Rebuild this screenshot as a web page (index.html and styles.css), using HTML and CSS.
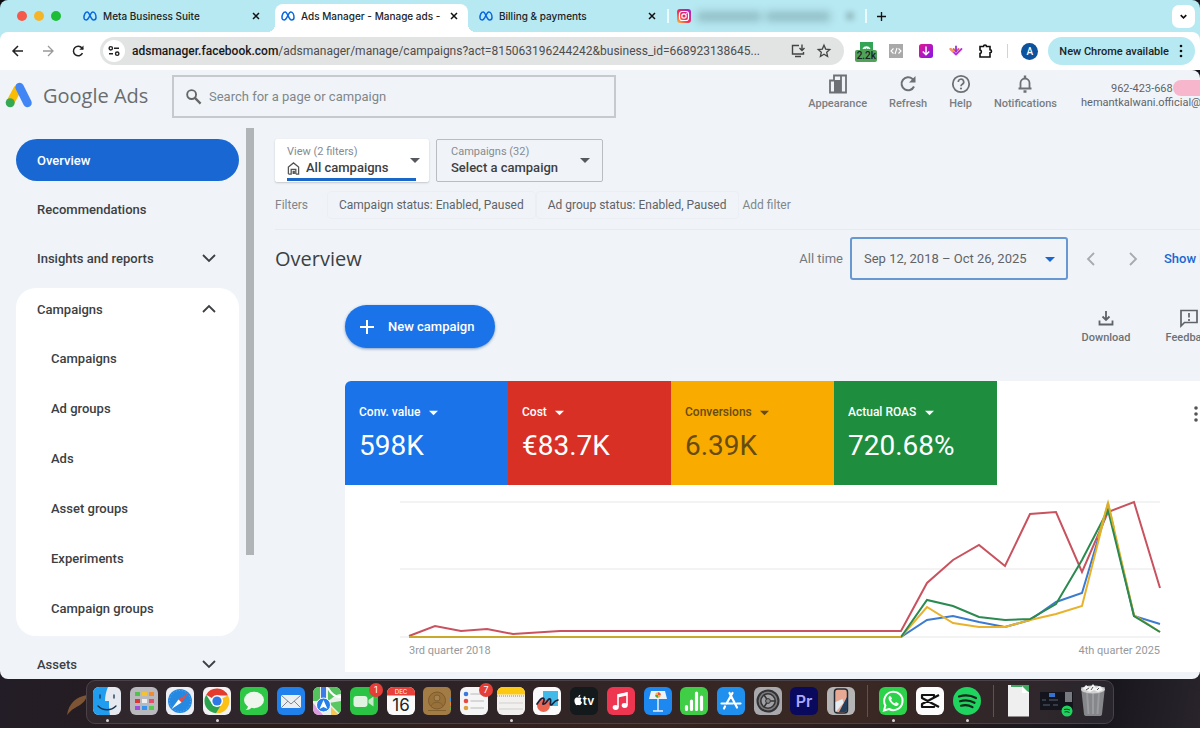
FILE: index.html
```html
<!DOCTYPE html>
<html lang="en">

<head>
    <meta charset="UTF-8">
    <meta name="viewport" content="width=device-width, initial-scale=1.0">
    <title>Google Ads - Overview</title>
    <link rel="stylesheet" href="styles.css">
</head>

<body>
    <!-- shared icons -->
    <svg class="defs" aria-hidden="true">
        <symbol id="meta" viewBox="0 0 14 14">
            <path d="M1 9.2C.8 6 2.2 3 4.2 3c2.4 0 3.6 8 6.3 8 1.4 0 2.5-.7 2.5-2.5C13 5.500 11.600 3 9.800 3 7.300 3 6 11 3.200 11 1.900 11 1.100 10.300 1 9.200z" fill="none" stroke="#0866e0" stroke-width="1.500"/>
        </symbol>
        <symbol id="close" viewBox="0 0 10 10">
            <path d="M2 2l6 6M8 2L2 8" stroke="#111" stroke-width="1.500"/>
        </symbol>
        <symbol id="caret" viewBox="0 0 10 10">
            <path d="M0 3h10L5 8z" fill="currentColor"/>
        </symbol>
        <symbol id="chevron" viewBox="0 0 14 14">
            <path d="M1 4l6 6 6-6" fill="none" stroke="currentColor" stroke-width="1.800"/>
        </symbol>
    </svg>

    <div class="desktop">
        <div class="window">
            <div class="tabbar">
                <div class="lights"><i></i><i></i><i></i></div>
                <div class="tab">
                    <svg class="favicon"><use href="#meta"/></svg>
                    <span>Meta Business Suite</span>
                    <button aria-label="Close tab"><svg><use href="#close"/></svg></button>
                </div>
                <div class="tab active">
                    <svg class="favicon"><use href="#meta"/></svg>
                    <span>Ads Manager - Manage ads -</span>
                    <button aria-label="Close tab"><svg><use href="#close"/></svg></button>
                </div>
                <div class="tab line">
                    <svg class="favicon"><use href="#meta"/></svg>
                    <span>Billing &amp; payments</span>
                    <button aria-label="Close tab"><svg><use href="#close"/></svg></button>
                </div>
                <div class="tab line">
                    <svg class="favicon" viewBox="0 0 14 14">
                        <defs>
                            <linearGradient id="insta" x1="0" y1="1" x2="1" y2="0">
                                <stop offset="0" stop-color="#fdc13c"/>
                                <stop offset=".45" stop-color="#f22b55"/>
                                <stop offset="1" stop-color="#a01be0"/>
                            </linearGradient>
                        </defs>
                        <rect width="14" height="14" rx="3" fill="url(#insta)"/>
                        <rect x="2.500" y="2.500" width="9" height="9" rx="2.500" fill="none" stroke="#fff" stroke-width="1.200"/>
                        <circle cx="7" cy="7" r="2.200" fill="none" stroke="#fff" stroke-width="1.200"/>
                        <circle cx="9.700" cy="4.300" r=".6" fill="#fff"/>
                    </svg>
                    <div class="hidden-title"><b></b><b></b></div>
                    <button class="faded" aria-label="Close tab"><svg><use href="#close"/></svg></button>
                </div>
                <button class="newtab" aria-label="New tab">
                    <svg viewBox="0 0 10 10"><path d="M5 0v10M0 5h10" stroke="#111" stroke-width="1.500"/></svg>
                </button>
                <button class="tabsearch" aria-label="Search tabs">
                    <svg viewBox="0 0 14 14"><path d="M4 5.500l3 3 3-3" fill="none" stroke="#111" stroke-width="1.700"/></svg>
                </button>
            </div>

            <div class="toolbar">
                <button class="nav" aria-label="Back">
                    <svg viewBox="0 0 14 14"><path d="M12 7H2.500M7 2L2 7l5 5" fill="none" stroke="#222" stroke-width="1.500"/></svg>
                </button>
                <button class="nav" aria-label="Forward">
                    <svg viewBox="0 0 14 14"><path d="M2 7h9.500M7 2l5 5-5 5" fill="none" stroke="#999" stroke-width="1.300"/></svg>
                </button>
                <button class="nav" aria-label="Reload">
                    <svg viewBox="0 0 14 14"><path d="M11.500 9.200A4.800 4.800 0 1 1 11 4l1 1" fill="none" stroke="#222" stroke-width="1.500"/><path d="M12.500 1.500v4.200H8.300z" fill="#222"/></svg>
                </button>
                <div class="omnibox">
                    <button class="site" aria-label="Site information">
                        <svg viewBox="0 0 14 14"><g fill="none" stroke="#222" stroke-width="1.400"><circle cx="3.800" cy="4.300" r="1.700"/><path d="M7 4.300h5M2 9.700h4"/><circle cx="10.200" cy="9.700" r="1.700"/></g></svg>
                    </button>
                    <div class="url" role="textbox" aria-label="Address"><b>adsmanager.facebook.com</b>/adsmanager/manage/campaigns?act=815063196244242&amp;business_id=668923138645...</div>
                    <button aria-label="Install">
                        <svg viewBox="0 0 16 16"><path d="M9 2.500H2.500v8.500h11V9M5 13.500h6M12 1.500v6M9.500 5L12 7.500 14.500 5" fill="none" stroke="#444" stroke-width="1.400"/></svg>
                    </button>
                    <button aria-label="Bookmark">
                        <svg viewBox="0 0 16 16"><path d="M8 2.200l1.700 3.900 4.100.4-3.100 2.800.9 4.200L8 11.300l-3.600 2.200.9-4.200-3.100-2.800 4.100-.4z" fill="none" stroke="#444" stroke-width="1.300"/></svg>
                    </button>
                </div>
                <div class="extensions">
                    <button class="counter" aria-label="Counter">
                        <svg viewBox="0 0 22 20">
                            <path d="M5 1h13v8H5z" fill="#32a455"/>
                            <path d="M8 8a4 4 0 0 1 7 0M10 8a1.500 1.500 0 0 1 3 0" fill="none" stroke="#fff" stroke-width="1.300"/>
                            <rect y="9" width="22" height="12" rx="2" fill="#51a259"/>
                        </svg>
                        <span>2.2k</span>
                    </button>
                    <button aria-label="Code">
                        <svg viewBox="0 0 14 14"><path d="M0 0h14v14H0z" fill="#a9a9a9"/><path d="M4.500 4.500L2 7l2.500 2.500M9.500 4.500L12 7 9.500 9.500M8 4L6 10" fill="none" stroke="#fff" stroke-width="1.100"/></svg>
                    </button>
                    <button aria-label="Downloader">
                        <svg viewBox="0 0 14 14"><defs><linearGradient id="dl" x1="0" y1="0" x2="1" y2="1"><stop offset="0" stop-color="#e01890"/><stop offset="1" stop-color="#8516ec"/></linearGradient></defs><rect width="14" height="14" rx="2.500" fill="url(#dl)"/><path d="M7 2.500v8M3.800 7.500L7 10.700l3.200-3.200" fill="none" stroke="#fff" stroke-width="1.500"/></svg>
                    </button>
                    <button aria-label="Saver">
                        <svg viewBox="0 0 14 14"><g fill="none" stroke-width="1.800" stroke-linejoin="round" stroke-linecap="round"><path d="M1.500 5L7 10.500 12.500 5" stroke="#b72fe6"/><path d="M4.500 5L7 7.500 9.500 5" stroke="#ef5867"/><path d="M7 2.500v5" stroke="#8a35e0"/><path d="M1.500 5l2.500 2.500" stroke="#f79b42"/></g></svg>
                    </button>
                    <button aria-label="Extensions">
                        <svg viewBox="0 0 14 14"><path d="M1 2.500h3.500a1.500 1.500 0 0 1 3 0H11v3.300a1.500 1.500 0 0 1 0 3V13H1V9.500a1.800 1.800 0 0 0 0-3.500z" fill="none" stroke="#111" stroke-width="1.600"/></svg>
                    </button>
                </div>
                <i class="divider"></i>
                <button class="avatar">A</button>
                <button class="update">New Chrome available
                    <svg viewBox="0 0 4 14"><g fill="#111"><circle cx="2" cy="2" r="1.300"/><circle cx="2" cy="7" r="1.300"/><circle cx="2" cy="12" r="1.300"/></g></svg>
                </button>
            </div>

            <div class="page">
                <header>
                    <a class="logo" href="#">
                        <svg viewBox="0 0 28 28">
                            <path d="M5.500 21L13 7" stroke="#fbbc04" stroke-width="8"/>
                            <path d="M14.500 6l8 16" stroke="#4285f4" stroke-width="8.500" stroke-linecap="round"/>
                            <circle cx="5.200" cy="21.800" r="4.500" fill="#34a853"/>
                        </svg>
                        <span>Google Ads</span>
                    </a>
                    <label class="search">
                        <svg viewBox="0 0 18 18"><circle cx="7" cy="7" r="4.700" fill="none" stroke="#666" stroke-width="2"/><path d="M10.500 10.500l6 6" stroke="#666" stroke-width="2.400"/></svg>
                        <input type="text" placeholder="Search for a page or campaign" aria-label="Search">
                    </label>
                    <div class="actions">
                        <button>
                            <svg viewBox="0 0 20 20"><path d="M6 1.500h12v17H2V6.500h4zM13 1.500v17" fill="none" stroke="#6d7175" stroke-width="1.800"/><path d="M6 6h7v12H6z" fill="#6d7175"/></svg>
                            Appearance
                        </button>
                        <button>
                            <svg viewBox="0 0 20 20"><path d="M16 12.500A6.500 6.500 0 1 1 14.500 5l2 2" fill="none" stroke="#6d7175" stroke-width="2"/><path d="M17.500 2v6.500H11z" fill="#6d7175"/></svg>
                            Refresh
                        </button>
                        <button>
                            <svg viewBox="0 0 20 20"><circle cx="10" cy="10" r="8.200" fill="none" stroke="#6d7175" stroke-width="1.800"/><path d="M7.300 8a2.700 2.700 0 1 1 4 2.300c-1 .6-1.300 1-1.300 2" fill="none" stroke="#6d7175" stroke-width="1.700"/><circle cx="10" cy="14.500" r="1.100" fill="#6d7175"/></svg>
                            Help
                        </button>
                        <button>
                            <svg viewBox="0 0 20 20"><path d="M5.500 14.500V9a4.500 4.500 0 0 1 9 0v5.500M3.500 14.500h13" fill="none" stroke="#6d7175" stroke-width="1.800"/><path d="M10 1.500v3M8.500 17.500h3" stroke="#6d7175" stroke-width="2.400"/></svg>
                            Notifications
                        </button>
                    </div>
                    <div class="account">
                        <div>962-423-668<i></i></div>
                        <div>hemantkalwani.official@</div>
                    </div>
                </header>

                <div class="content">
                    <nav class="sidebar">
                        <div class="menu">
                            <a class="current" href="#">Overview</a>
                            <a href="#">Recommendations</a>
                            <a href="#">Insights and reports <svg><use href="#chevron"/></svg></a>
                            <div class="group">
                                <a href="#">Campaigns <svg class="up"><use href="#chevron"/></svg></a>
                                <a class="sub" href="#">Campaigns</a>
                                <a class="sub" href="#">Ad groups</a>
                                <a class="sub" href="#">Ads</a>
                                <a class="sub" href="#">Asset groups</a>
                                <a class="sub" href="#">Experiments</a>
                                <a class="sub" href="#">Campaign groups</a>
                            </div>
                            <a class="last" href="#">Assets <svg><use href="#chevron"/></svg></a>
                        </div>
                        <div class="scrollbar"></div>
                    </nav>

                    <main>
                        <div class="pickers">
                            <div class="picker view">
                                <label for="view">View (2 filters)</label>
                                <div class="value">
                                    <svg class="home" viewBox="0 0 14 14"><path d="M1.500 13V5.500L7 1l5.500 4.500V13H9.500" fill="none" stroke="#555" stroke-width="1.400"/><path d="M1.500 13h3V8h5v5" fill="none" stroke="#555" stroke-width="1.400"/><path d="M6 9.500h2.500V13H6z" fill="#555"/></svg>
                                    <select id="view"><option>All campaigns</option></select>
                                </div>
                                <svg class="caret"><use href="#caret"/></svg>
                            </div>
                            <div class="picker">
                                <label for="campaign">Campaigns (32)</label>
                                <div class="value">
                                    <select id="campaign"><option>Select a campaign</option></select>
                                </div>
                                <svg class="caret"><use href="#caret"/></svg>
                            </div>
                        </div>

                        <div class="filters">
                            <span>Filters</span>
                            <button class="chip">Campaign status: Enabled, Paused</button>
                            <button class="chip">Ad group status: Enabled, Paused</button>
                            <button class="add">Add filter</button>
                        </div>

                        <div class="titlebar">
                            <h1>Overview</h1>
                            <label for="range">All time</label>
                            <div class="range">
                                <select id="range"><option>Sep 12, 2018 – Oct 26, 2025</option></select>
                                <svg class="caret"><use href="#caret"/></svg>
                            </div>
                            <button class="step" aria-label="Previous period"><svg class="left"><use href="#chevron"/></svg></button>
                            <button class="step" aria-label="Next period"><svg class="right"><use href="#chevron"/></svg></button>
                            <a class="show" href="#">Show l</a>
                        </div>

                        <div class="tools">
                            <button class="new">
                                <svg viewBox="0 0 16 16"><path d="M8 1v14M1 8h14" stroke="#fff" stroke-width="2"/></svg>
                                New campaign
                            </button>
                            <button class="tool download">
                                <svg viewBox="0 0 18 18"><path d="M9 2v9M5.500 7.500L9 11l3.500-3.500M2.500 11.500v4h13v-4" fill="none" stroke="#5f6368" stroke-width="1.800"/></svg>
                                Download
                            </button>
                            <button class="tool">
                                <svg viewBox="0 0 18 18"><path d="M1 17V1.500h16v12H4.500z" fill="none" stroke="#5f6368" stroke-width="1.700"/><path d="M9 4v4.500M9 10v2" stroke="#5f6368" stroke-width="1.700"/></svg>
                                Feedback
                            </button>
                        </div>

                        <section class="card">
                            <div class="scores">
                                <div class="score blue">
                                    <label><select aria-label="First metric"><option>Conv. value</option></select><svg><use href="#caret"/></svg></label>
                                    <strong>598K</strong>
                                </div>
                                <div class="score red">
                                    <label><select aria-label="Second metric"><option>Cost</option></select><svg><use href="#caret"/></svg></label>
                                    <strong>€83.7K</strong>
                                </div>
                                <div class="score yellow">
                                    <label><select aria-label="Third metric"><option>Conversions</option></select><svg><use href="#caret"/></svg></label>
                                    <strong>6.39K</strong>
                                </div>
                                <div class="score green">
                                    <label><select aria-label="Fourth metric"><option>Actual ROAS</option></select><svg><use href="#caret"/></svg></label>
                                    <strong>720.68%</strong>
                                </div>
                                <button class="more" aria-label="More">
                                    <svg viewBox="0 0 4 16"><g fill="#555"><circle cx="2" cy="2" r="1.800"/><circle cx="2" cy="8" r="1.800"/><circle cx="2" cy="14" r="1.800"/></g></svg>
                                </button>
                            </div>
                            <div class="chart">
                                <svg viewBox="0 0 760 144" preserveAspectRatio="none">
                                    <g class="grid"><path d="M0 4h760M0 71h760M0 139h760"/></g>
                                    <polyline stroke="#c9525f" points="9,138 35,128 61,133 87,131 113,136 160,133 501,133 527,85 553,62 579,47 605,68 630,16 656,14 682,74 708,14 734,4 760,90"/>
                                    <polyline stroke="#3d7bd0" points="9,139 501,139 527,122 553,118 579,124 605,129 630,122 656,104 682,95 708,8 734,118 760,126"/>
                                    <polyline stroke="#e8b22c" points="9,139 501,139 527,109 553,125 579,129 605,129 630,122 656,116 682,108 708,5 734,117 760,134"/>
                                    <polyline stroke="#2b8a50" points="501,139 527,102 553,108 579,119 605,122 630,121 656,106 682,62 708,12 734,118 760,134"/>
                                    <polyline stroke="#c9a92c" points="9,139 501,139"/>
                                    <polyline stroke="#d9b02c" points="698,40 708,5 714,30"/>
                                </svg>
                                <div class="axis"><span>3rd quarter 2018</span><span>4th quarter 2025</span></div>
                            </div>
                        </section>
                    </main>
                </div>
            </div>
        </div>

        <svg class="leaf" viewBox="0 0 20 22" aria-hidden="true"><path d="M0 20C2 8 9 2 20 0c-1 7-7 10-12 13-4 2-5 4-8 7z" fill="#7d5434"/></svg>

        <div class="dock">
            <div class="app running">
                <svg viewBox="0 0 28 28"><rect width="28" height="28" rx="6" fill="#e6eaf0"/><path d="M6 0h9c-2 5-3 9-3 14h4c0 5 0 9 1 14H6a6 6 0 0 1-6-6V6a6 6 0 0 1 6-6z" fill="#219df0"/><path d="M7 8v3M21 8v3M5 19c5 5 13 5 18 0" fill="none" stroke="#12304a" stroke-width="1.300" stroke-linecap="round"/></svg>
            </div>
            <div class="app">
                <svg viewBox="0 0 28 28"><rect width="28" height="28" rx="6" fill="#b9b9bd"/><path d="M5 5h5v4H5z" fill="#51c14e"/><path d="M12 5h5v4h-5z" fill="#f4c233"/><path d="M19 5h5v4h-5z" fill="#ee8c35"/><path d="M5 12h5v4H5z" fill="#d83936"/><path d="M12 12h5v4h-5z" fill="#eee"/><path d="M19 12h5v4h-5z" fill="#e84c6c"/><path d="M5 19h5v4H5z" fill="#a14ee0"/><path d="M12 19h5v4h-5z" fill="#3694ee"/><path d="M19 19h5v4h-5z" fill="#55c84d"/></svg>
            </div>
            <div class="app">
                <svg viewBox="0 0 28 28"><rect width="28" height="28" rx="6" fill="#eceef4"/><circle cx="14" cy="14" r="12" fill="#2589e2"/><circle cx="14" cy="14" r="10.500" fill="none" stroke="#5fadee" stroke-dasharray="1 2"/><path d="M22.500 6L15.500 15.500 12.500 12.500z" fill="#e94b43"/><path d="M5.500 22l7-9.500 3 3z" fill="#fff"/></svg>
            </div>
            <div class="app running">
                <svg viewBox="0 0 28 28"><rect width="28" height="28" rx="6" fill="#f2f2f2"/><path d="M14 14L3.200 7.700A12.300 12.300 0 0 1 25 8.500H14z" fill="#e33b2e"/><path d="M14 14L25 8.500A12.300 12.300 0 0 1 13 26.300l5-9z" fill="#fbc116"/><path d="M14 14l4 4-5 8.300A12.300 12.300 0 0 1 3.200 7.700L9 17z" fill="#2ba24c"/><circle cx="14" cy="14" r="6" fill="#fff"/><circle cx="14" cy="14" r="4.600" fill="#2f78e6"/></svg>
            </div>
            <div class="app">
                <svg viewBox="0 0 28 28"><rect width="28" height="28" rx="6" fill="#2ec846"/><ellipse cx="14" cy="13" rx="10" ry="8.300" fill="#eef6ee"/><path d="M8 18c0 3-1 4-2.500 5 3 .3 5-1 6.500-3z" fill="#eef6ee"/></svg>
            </div>
            <div class="app">
                <svg viewBox="0 0 28 28"><rect width="28" height="28" rx="6" fill="#2080ec"/><rect x="4" y="8" width="20" height="13" rx="1.500" fill="#eceff2"/><path d="M4.500 8.500L14 17l9.500-8.500M4.500 20.500L11 14M23.500 20.500L17 14" fill="none" stroke="#7d8890"/></svg>
            </div>
            <div class="app">
                <svg viewBox="0 0 28 28"><clipPath id="mapclip"><rect width="28" height="28" rx="6"/></clipPath><g clip-path="url(#mapclip)"><path d="M0 0h28v28H0z" fill="#e9f0e9"/><path d="M0 0h7v14H0zM15 0h13v7c-6 0-8 4-13 7z" fill="#54c35d"/><path d="M0 16l10 12H0z" fill="#dc9cde"/><path d="M16 16l12 12V14z" fill="#59c862"/><path d="M18 20l8 8h-8z" fill="#f7c64f"/><path d="M8 0h5v12H8z" fill="#3b7ce6"/><path d="M15 1c3 6 7 9 13 9" fill="none" stroke="#fff" stroke-width="2"/><circle cx="10.500" cy="18" r="7" fill="#237fe9" stroke="#fff"/><path d="M10.500 13l4 9-4-2-4 2z" fill="#fff"/></g></svg>
            </div>
            <div class="app">
                <svg viewBox="0 0 28 28"><rect width="28" height="28" rx="6" fill="#2ac344"/><rect x="3.500" y="9" width="14" height="11" rx="3" fill="#dff3e0"/><path d="M18.500 13l5-3.500v10l-5-3.500z" fill="#c6e9c9"/></svg>
                <em>1</em>
            </div>
            <div class="app">
                <svg viewBox="0 0 28 28"><rect width="28" height="28" rx="6" fill="#fafafa"/><path d="M0 8.500V6a6 6 0 0 1 6-6h16a6 6 0 0 1 6 6v2.500z" fill="#e84038"/><text x="14" y="7" font-size="6" fill="#fff">DEC</text><text x="14" y="24" font-size="17" fill="#222">16</text></svg>
            </div>
            <div class="app">
                <svg viewBox="0 0 28 28"><rect width="28" height="28" rx="5" fill="#a37b45"/><circle cx="14" cy="13.500" r="8.500" fill="#987039" stroke="#7e5b2d"/><circle cx="14" cy="11" r="3" fill="#a78150" stroke="#80602f"/><path d="M8 19c2-5 10-5 12 0M5 23.500h18" fill="none" stroke="#80602f"/><path d="M27 10h1v4h-1z" fill="#3d94d8"/><path d="M27 15h1v4h-1z" fill="#e68431"/><path d="M27 20h1v3h-1z" fill="#56b650"/></svg>
            </div>
            <div class="app">
                <svg viewBox="0 0 28 28"><rect width="28" height="28" rx="6" fill="#f5f5f5"/><path d="M10.500 7H24M10.500 14H24M10.500 21H24" stroke="#b9b9b9"/><circle cx="6" cy="7" r="2.300" fill="#3d78dd"/><circle cx="6" cy="14" r="2.300" fill="#e54a45"/><circle cx="6" cy="21" r="2.300" fill="#dda03c"/></svg>
                <em>7</em>
            </div>
            <div class="app running">
                <svg viewBox="0 0 28 28"><rect width="28" height="28" rx="6" fill="#f2f0ee"/><path d="M0 7.500V6a6 6 0 0 1 6-6h16a6 6 0 0 1 6 6v1.500z" fill="#fbc911"/><path d="M0 9h28" stroke="#9c8a58" stroke-dasharray="1 1"/><path d="M2 16h24M2 22h24" stroke="#d0d0d0"/></svg>
            </div>
            <div class="app">
                <svg viewBox="0 0 28 28"><rect width="28" height="28" rx="6" fill="#fbfbfb"/><path d="M10 4h15v15H10z" fill="#41b9e9"/><circle cx="10.500" cy="18.500" r="6.500" fill="#ec6550"/><path d="M4 17c4-6 6-7 7-5s-3 6 0 5 4-6 6-5-1 6 1 6 2-4 7-5" fill="none" stroke="#16213e" stroke-width="1.700" stroke-linecap="round"/></svg>
            </div>
            <div class="app">
                <svg viewBox="0 0 28 28"><rect width="28" height="28" rx="6" fill="#14191c"/><path d="M8.500 10.800c1.200-.7 2.300-.5 3.100.5-1.400 1.200-1.200 3.200.4 4-.7 1.900-1.700 3.200-2.800 2.800-.8-.3-1.200-.3-2 0C5 18.600 3.300 12.600 5.500 11c1-.7 2-.5 3-.2zM8.300 10.300c0-1.400.8-2.300 2-2.500.1 1.400-.8 2.400-2 2.500z" fill="#fff"/><text x="18.500" y="18" font-size="12" font-weight="600" fill="#fff">tv</text></svg>
            </div>
            <div class="app">
                <svg viewBox="0 0 28 28"><rect width="28" height="28" rx="6" fill="#ee3650"/><path d="M11 20V8l9-2v12" fill="none" stroke="#fff" stroke-width="1.600"/><path d="M11 7.500l9-2v3l-9 2z" fill="#fff"/><ellipse cx="8.700" cy="20.500" rx="3" ry="2.400" fill="#fff"/><ellipse cx="17.700" cy="18.500" rx="3" ry="2.400" fill="#fff"/></svg>
            </div>
            <div class="app">
                <svg viewBox="0 0 28 28"><rect width="28" height="28" rx="6" fill="#1d88ef"/><path d="M7 4h14l2 8H5z" fill="#eef3f7"/><circle cx="14" cy="8" r="2.700" fill="#f2b33c"/><path d="M14 8V5.300A2.700 2.700 0 0 1 16.700 8z" fill="#e0524b"/><path d="M14 8v2.700A2.700 2.700 0 0 1 11.300 8z" fill="#43a95b"/><path d="M14 12v11.500M9 24h10" stroke="#e6eef5" stroke-width="1.500"/></svg>
            </div>
            <div class="app">
                <svg viewBox="0 0 28 28"><rect width="28" height="28" rx="6" fill="#3fce46"/><path d="M6.500 22.500V19.500M11.500 22.500V14M16.500 22.500V6M21.500 22.500V10" stroke="#fff" stroke-width="3.200" stroke-linecap="round"/></svg>
            </div>
            <div class="app">
                <svg viewBox="0 0 28 28"><rect width="28" height="28" rx="6" fill="#2090ef"/><path d="M12.500 6l7.500 14.500M15.500 6l-6 10.500M8 19.500l-1 2M4.500 16.500H16M20 16.500h3.500" stroke="#fff" stroke-width="2.200" stroke-linecap="round"/></svg>
            </div>
            <div class="app">
                <svg viewBox="0 0 28 28"><rect width="28" height="28" rx="6" fill="#a9a9ad"/><circle cx="14" cy="14" r="10.500" fill="#7b7b7f" stroke="#333" stroke-width="2"/><circle cx="14" cy="14" r="7.200" fill="#a2a2a6" stroke="#333" stroke-width="1.500"/><circle cx="14" cy="14" r="2.400" fill="#888" stroke="#333"/><path d="M16.500 14H21M12.700 12l-3-4.500M12.700 16l-3 4.500" stroke="#333" stroke-width="1.500"/></svg>
            </div>
            <div class="app">
                <svg viewBox="0 0 28 28"><rect width="28" height="28" rx="6" fill="#09095d"/><text x="14" y="20" font-size="16" font-weight="600" fill="#a9a8fa">Pr</text></svg>
            </div>
            <div class="app">
                <svg viewBox="0 0 28 28"><rect width="28" height="28" rx="6" fill="#b5b5b5"/><rect x="7.500" y="2" width="13" height="24" rx="3" fill="#e7a894" stroke="#252a33" stroke-width="1.500"/><path d="M12 25l8-15v13a2 2 0 0 1-2 2z" fill="#243f5c"/><path d="M8.500 15l7-3 1 4-8 9z" fill="#e4edf2"/></svg>
            </div>
            <hr>
            <div class="app running">
                <svg viewBox="0 0 28 28"><rect width="28" height="28" rx="6" fill="#2bd24a"/><path d="M5 23.500l1.400-5A9.200 9.200 0 1 1 10 22z" fill="none" stroke="#fff" stroke-width="2"/><path d="M11 8.800c-2 1-2 3.500.5 6.500 3 3.600 6 4.500 7.500 3 .8-.8.8-1.800.3-2.100l-2-1c-1-.4-1.200 1.400-2.200.8-1.300-.6-2.400-1.900-2.900-3-.4-.8 1.100-1 .7-2.100z" fill="#fff"/></svg>
            </div>
            <div class="app">
                <svg viewBox="0 0 28 28"><rect width="28" height="28" rx="6" fill="#fcfcfc"/><path d="M18 11V8H6v3l17 9M18 17v3H6v-3l17-9" fill="none" stroke="#111" stroke-width="2.200" stroke-linejoin="round"/></svg>
            </div>
            <div class="app running">
                <svg viewBox="0 0 28 28"><circle cx="14" cy="14" r="14" fill="#1fd45f"/><path d="M6 9.500c6-1.800 12-1.200 17 1.500M7 14.300c5-1.500 10-1 14.500 1.500M8 18.700c4-1.200 8-.7 11.500 1.400" fill="none" stroke="#17271c" stroke-width="2.200" stroke-linecap="round"/></svg>
            </div>
            <hr>
            <div class="app">
                <svg viewBox="0 0 28 28"><path d="M3-2h15l6 6v25.500H3z" fill="#efefef"/><path d="M6-2h18v7l-4-1-3-4H6z" fill="#3daa5f"/><path d="M17-1v7h7z" fill="#fff"/></svg>
            </div>
            <div class="app">
                <svg viewBox="0 0 28 28"><path d="M-2 5h33v18H-2z" fill="#14151c"/><path d="M7 6h6v4H7z" fill="#3474cf"/><path d="M23 5h7v10h-7z" fill="#777a80"/><path d="M0 13h4M7 13h9M1 18h7M11 18h5" stroke="#343b47" stroke-width="2"/><circle cx="25" cy="24" r="5.500" fill="#1ed45e"/><path d="M22 22.500q3-1 6 .5M22.500 25q2.500-1 5 .5" fill="none" stroke="#173322"/></svg>
            </div>
            <div class="app">
                <svg viewBox="0 0 28 28"><path d="M2 0h24l-3 27q0 2-3 2H8q-3 0-3-2z" fill="#85878b"/><path d="M8 5l1.500 22M14 5v22M20 5l-1.500 22" stroke="#9a9c9f" stroke-width="2"/><ellipse cx="14" cy="2.500" rx="12" ry="4" fill="#d0d0d0"/><path d="M4 2l3-4 4 3 3-4 3 4 4-2 3 4-5 2-4-2-4 2-4-2z" fill="#f4f4f4"/><path d="M7 3l3-2M12 3l2-3M18 3l2-2" stroke="#555"/></svg>
            </div>
        </div>
    </div>
</body>

</html>
```
FILE: styles.css
```css
body {
    margin: 0;
    background: white;
    font-family: Roboto, "Liberation Sans", sans-serif;
    color: #3c4043;
}

button,
select,
input {
    font: inherit;
    color: inherit;
    background: none;
    border: 0;
    padding: 0;
    margin: 0;
}

select {
    appearance: none;
    outline: 0;
}

a {
    color: inherit;
    text-decoration: none;
}

.defs {
    position: absolute;
    width: 0;
    height: 0;
}

svg {
    display: block;
    flex: none;
    overflow: visible;
}

.desktop {
    position: relative;
    overflow: hidden;
    padding-bottom: 4px;
    background: linear-gradient(100deg, #0c0b10, #221d27 8%, #2b1c1b 30%, #35231e 60%, #17151c 92%, #29242c);
}

.window {
    border-radius: 8px;
    overflow: hidden;
    background: #16131c;
}

/* browser tabs */
.tabbar {
    display: flex;
    align-items: center;
    height: 32px;
    background: #b7e9f2;
    font: 500 10px Inter, sans-serif;
    color: #1c2326;
}

.lights {
    display: flex;
    gap: 7px;
    width: 58px;
    padding-left: 17px;
}

.lights i {
    width: 10px;
    height: 10px;
    border-radius: 50%;
    background: #f5594b;
}

.lights i:nth-child(2) {
    background: #f5b52a;
}

.lights i:nth-child(3) {
    background: #1dbd37;
}

.tab {
    position: relative;
    z-index: 0;
    display: flex;
    align-items: center;
    gap: 6px;
    flex: 0 1 198px;
    min-width: 0;
    box-sizing: border-box;
    height: 32px;
    padding: 0 12px 0 8px;
}

.tab span {
    flex: 1;
    overflow: hidden;
    white-space: nowrap;
}

.tab button svg {
    width: 10px;
    height: 10px;
}

.favicon {
    width: 14px;
    height: 14px;
}

.active::before {
    content: "";
    position: absolute;
    z-index: -1;
    inset: 4px 3px 0 2px;
    border-radius: 8px 8px 0 0;
    background: white;
}

.active::after {
    content: "";
    position: absolute;
    z-index: -1;
    inset: 24px -5px 0 -6px;
    background:
        radial-gradient(circle at 0 0, transparent 8px, white 8px) left / 8px 8px no-repeat,
        radial-gradient(circle at 100% 0, transparent 8px, white 8px) right / 8px 8px no-repeat;
}

.line::after {
    content: "";
    position: absolute;
    right: 0;
    top: 9px;
    width: 2px;
    height: 14px;
    background: #eafafd;
}

.hidden-title {
    display: flex;
    gap: 5px;
    flex: 1;
    filter: blur(4px);
}

.hidden-title b {
    width: 64px;
    height: 9px;
    background: #8db8c1;
}

.faded {
    filter: blur(3px);
    opacity: .6;
}

.newtab {
    padding: 0 10px;
}

.newtab svg {
    width: 9px;
    height: 9px;
}

.tabsearch {
    margin: 0 5px 0 auto;
    padding: 5px;
    border-radius: 7px;
    background: white;
}

.tabsearch svg {
    width: 13px;
    height: 13px;
}

/* address bar */
.toolbar {
    position: relative;
    z-index: 0;
    display: flex;
    align-items: center;
    height: 38px;
    font-size: 11px;
    font-weight: 500;
    color: #1c2326;
}

.toolbar::before {
    content: "";
    position: absolute;
    inset: 0 0 20px;
    z-index: -1;
    background: #b7e9f2;
}

.toolbar::after {
    content: "";
    position: absolute;
    inset: 0;
    z-index: -1;
    border-radius: 8px 8px 0 0;
    background: white;
}

.nav {
    margin-left: 11px;
    margin-right: 5px;
}

.nav svg {
    width: 14px;
    height: 14px;
}

.omnibox {
    display: flex;
    align-items: center;
    gap: 10px;
    flex: 1;
    min-width: 0;
    height: 28px;
    margin-left: 10px;
    padding-right: 12px;
    border-radius: 14px;
    background: #e2e3e3;
}

.site {
    margin: 0 -3px 0 3px;
    padding: 4px;
    border-radius: 50%;
    background: white;
}

.url {
    flex: 1;
    overflow: hidden;
    white-space: nowrap;
    font-weight: 400;
    font-size: 12px;
    color: #4b4d4f;
}

.url b {
    font-weight: 500;
    color: #16191b;
}

.omnibox button svg {
    width: 16px;
    height: 16px;
}

.omnibox .site svg {
    width: 14px;
    height: 14px;
}

.extensions {
    display: flex;
    align-items: center;
    gap: 16px;
    margin-left: 11px;
}

.extensions svg {
    width: 14px;
    height: 14px;
}

.counter {
    position: relative;
    margin-right: -4px;
}

.counter svg {
    width: 22px;
    height: 20px;
}

.counter span {
    position: absolute;
    left: 0;
    right: 0;
    bottom: -1px;
    font-size: 10px;
    line-height: 12px;
}

.divider {
    width: 1px;
    height: 14px;
    margin: 0 13px 0 14px;
    background: #b7dde8;
}

.avatar {
    width: 17px;
    height: 17px;
    border-radius: 50%;
    background: #0c529c;
    color: white;
    font-size: 10px;
}

.update {
    display: flex;
    align-items: center;
    gap: 10px;
    height: 28px;
    margin: 0 5px 0 10px;
    padding: 0 12px 0 11px;
    border-radius: 14px;
    background: #b7e9f2;
    white-space: nowrap;
}

.update svg {
    width: 4px;
    height: 14px;
}

/* google ads */
.page {
    overflow: hidden;
    border-top-right-radius: 8px;
    background: #f0f4f8;
}

header {
    display: flex;
    align-items: flex-start;
    height: 58px;
}

.logo {
    display: flex;
    align-items: center;
    gap: 10px;
    flex: none;
    box-sizing: border-box;
    width: 172px;
    padding: 11px 0 0 5px;
    font: 20px "Open Sans", sans-serif;
    color: #696c70;
}

.logo svg {
    width: 28px;
    height: 28px;
}

.search {
    display: flex;
    align-items: center;
    gap: 7px;
    box-sizing: border-box;
    flex: 0 1 444px;
    height: 43px;
    margin-top: 5px;
    padding: 0 11px;
    border: 2px solid #c6cacd;
}

.search svg {
    width: 17px;
    height: 17px;
}

.search input {
    flex: 1;
    min-width: 0;
    outline: 0;
    font-size: 13px;
}

.search input::placeholder {
    color: #80868b;
}

.actions {
    display: flex;
    gap: 22px;
    margin-left: auto;
    padding-top: 4px;
    font-size: 11px;
    font-weight: 500;
    line-height: 16px;
    color: #7a7e82;
}

.actions svg {
    width: 20px;
    height: 20px;
    margin: 0 auto 2px;
}

.account {
    flex: none;
    box-sizing: border-box;
    width: 132px;
    margin-left: 11px;
    padding: 12px 0 0 13px;
    font-size: 11px;
    line-height: 14px;
    white-space: nowrap;
    color: #5f6368;
}

.account div:first-child {
    position: relative;
    padding-left: 30px;
}

.account i {
    position: absolute;
    left: 92px;
    right: 0;
    top: -2px;
    height: 16px;
    border-radius: 8px 0 0 8px;
    background: #f7b6cc;
}

.content {
    display: flex;
}

.sidebar {
    display: flex;
    flex: none;
    width: 262px;
    font-size: 13px;
    font-weight: 500;
}

.menu {
    width: 223px;
    margin: 11px 7px 0 16px;
}

.menu a {
    display: flex;
    align-items: center;
    justify-content: space-between;
    box-sizing: border-box;
    height: 42px;
    margin-bottom: 7px;
    padding: 0 23px 0 21px;
}

.menu svg {
    width: 14px;
    height: 14px;
}

.menu .up {
    transform: rotate(180deg);
}

.menu .current {
    border-radius: 21px;
    background: #1967d2;
    color: white;
}

.group {
    margin-top: 9px;
    padding-bottom: 3px;
    border-radius: 20px;
    background: white;
}

.menu .group a {
    margin-bottom: 3px;
}

.menu .group .sub {
    height: 50px;
    margin: 0;
    padding-left: 35px;
}

.menu .last {
    height: 30px;
    margin: 13px 0 0;
}

.scrollbar {
    width: 8px;
    height: 427px;
    background: #b0b4b6;
}

main {
    flex: 1;
    min-width: 0;
    padding: 11px 0 7px 13px;
}

.pickers {
    display: flex;
    gap: 7px;
}

.picker {
    position: relative;
    box-sizing: border-box;
    width: 167px;
    height: 43px;
    padding: 4px 14px;
    border: 1px solid #b9bdc1;
    border-radius: 2px;
    font-size: 11px;
    line-height: 16px;
    color: #868b90;
}

.view {
    width: 154px;
    padding: 4px 11px;
    border-color: white;
    background: white;
    box-shadow: 0 1px 2px #c3c7ca;
}

.view::after {
    content: "";
    position: absolute;
    left: 11px;
    right: 12px;
    bottom: 0;
    height: 3px;
    background: #1967c8;
}

.picker label {
    display: block;
}

.value {
    display: flex;
    align-items: center;
    gap: 6px;
    font-size: 13px;
    font-weight: 500;
    color: #3c4043;
}

.home {
    width: 13px;
    height: 13px;
}

.caret {
    width: 10px;
    height: 10px;
    color: #55595d;
}

.picker .caret {
    position: absolute;
    right: 12px;
    top: 15px;
}

.view .caret {
    right: 8px;
}

.filters {
    display: flex;
    align-items: center;
    height: 30px;
    padding: 8px 0 9px;
    border-bottom: 1px solid #e7ebee;
    font-size: 12px;
    color: #80868b;
}

.filters span {
    width: 52px;
}

.chip {
    height: 28px;
    padding: 0 11px;
    border: 1px solid #ebeff3;
    border-radius: 4px;
    color: #5f6368;
}

.add {
    margin-left: 4px;
}

.titlebar {
    display: flex;
    align-items: center;
    margin-top: 7px;
    font-size: 13px;
    color: #74797e;
    white-space: nowrap;
}

h1 {
    margin: 0 auto 0 0;
    font: 20px "Open Sans", sans-serif;
    color: #3c4043;
}

.range {
    display: flex;
    align-items: center;
    justify-content: space-between;
    box-sizing: border-box;
    width: 218px;
    height: 43px;
    margin: 0 16px 0 7px;
    padding: 0 11px 0 12px;
    border: 2px solid #6798d2;
    border-radius: 3px;
    color: #5f6368;
}

.range .caret {
    color: #1967d2;
}

.step {
    width: 14px;
    margin-right: 28px;
    color: #a7abae;
}

.step + .step {
    margin-right: 24px;
}

.step svg {
    width: 14px;
    height: 14px;
}

.left {
    transform: rotate(90deg);
}

.right {
    transform: rotate(-90deg);
}

.show {
    width: 36px;
    font-weight: 500;
    color: #1967d2;
}

.tools {
    display: flex;
    align-items: center;
    gap: 35px;
    margin: 25px -13px 33px 70px;
}

.new {
    display: flex;
    align-items: center;
    gap: 13px;
    height: 43px;
    padding: 0 21px 0 14px;
    border-radius: 22px;
    background: #1a73e8;
    box-shadow: 0 1px 3px #7f9cc0;
    color: white;
    font-size: 13px;
    font-weight: 500;
}

.new svg {
    width: 16px;
    height: 16px;
}

.tool {
    font-size: 11px;
    font-weight: 500;
    color: #6d7175;
}

.tool svg {
    width: 18px;
    height: 18px;
    margin: 0 auto 4px;
}

.download {
    margin-left: auto;
}

.card {
    margin-left: 70px;
    overflow: hidden;
    border-radius: 6px 0 0 0;
    background: white;
}

.scores {
    display: flex;
}

.score {
    flex: 0 1 163px;
    box-sizing: border-box;
    height: 104px;
    padding: 22px 0 0 14px;
    color: white;
}

.score label {
    display: flex;
    align-items: center;
    gap: 8px;
    font-size: 12px;
    font-weight: 500;
    line-height: 18px;
}

.score label svg {
    width: 9px;
    height: 9px;
}

.score strong {
    display: block;
    margin-top: 7px;
    font-size: 28px;
    font-weight: 400;
    line-height: 36px;
}

.blue {
    background: #1a73e8;
}

.red {
    background: #d93025;
}

.yellow {
    background: #f9ab00;
    color: #664c12;
}

.green {
    background: #1e8e3e;
}

.more {
    margin: 0 2px 38px auto;
}

.more svg {
    width: 4px;
    height: 16px;
}

.chart {
    padding: 13px 40px 13px 55px;
}

.chart svg {
    width: 100%;
    height: 144px;
}

.chart polyline {
    fill: none;
    stroke-width: 2;
    vector-effect: non-scaling-stroke;
}

.grid {
    fill: none;
    stroke: #e6e7e8;
}

.axis {
    display: flex;
    justify-content: space-between;
    margin-top: 1px;
    padding-left: 9px;
    font-size: 11px;
    line-height: 16px;
    color: #96999c;
}

/* dock */
.leaf {
    position: absolute;
    left: 67px;
    bottom: 11px;
    width: 20px;
    height: 22px;
}

.dock {
    position: relative;
    display: flex;
    justify-content: space-between;
    box-sizing: border-box;
    width: 100%;
    max-width: 1028px;
    height: 44px;
    margin: 1px auto 0;
    padding: 6px 6px 0;
    border: 1px solid #4a4248;
    border-radius: 9px;
    background: linear-gradient(90deg, #30282d, #2c2327 30%, #3a2823 75%, #29262e);
}

.dock hr {
    width: 1px;
    height: 32px;
    margin: -2px 3px 0;
    border: 0;
    background: #5c5357;
}

.app {
    position: relative;
    width: 28px;
    height: 28px;
}

.app svg {
    width: 28px;
    height: 28px;
}

.app text {
    font-family: Inter, sans-serif;
    text-anchor: middle;
}

.app em {
    position: absolute;
    top: -4px;
    right: -5px;
    width: 14px;
    height: 14px;
    border-radius: 50%;
    background: #e53d38;
    color: white;
    font: 9px/14px Inter, sans-serif;
    text-align: center;
}

.running::after {
    content: "";
    position: absolute;
    left: 13px;
    bottom: -7px;
    width: 3px;
    height: 3px;
    border-radius: 50%;
    background: #d8d4d6;
}
```
